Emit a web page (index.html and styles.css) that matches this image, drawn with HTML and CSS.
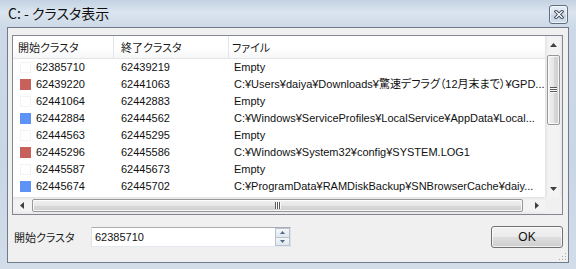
FILE: index.html
```html
<!DOCTYPE html>
<html lang="ja">
<head>
    <meta charset="UTF-8">
    <meta name="viewport" content="width=device-width, initial-scale=1.0">
    <title>C: - クラスタ表示</title>
    <link rel="stylesheet" href="styles.css">
</head>
<body>
    <div class="window">
        <div class="titlebar">
            <span class="title">C: - クラスタ表示</span>
            <button class="close" aria-label="閉じる">
                <svg width="10" height="9" viewBox="0 0 10 9">
                    <path d="M2 1.5 L8 7.5 M8 1.5 L2 7.5" stroke="#3d4a5a" stroke-width="3.2" stroke-linecap="square"/>
                    <path d="M2 1.5 L8 7.5 M8 1.5 L2 7.5" stroke="#fff" stroke-width="1.3" stroke-linecap="square"/>
                </svg>
            </button>
        </div>
        <div class="client">
            <div class="listview">
                <div class="lv-main">
                    <div class="lv-head">
                        <div class="c1">開始クラスタ</div>
                        <div class="c2">終了クラスタ</div>
                        <div class="c3">ファイル</div>
                    </div>
                    <div class="lv-body">
                        <div class="lv-row"><div class="c1"><span class="swatch"></span>62385710</div><div class="c2">62439219</div><div class="c3">Empty</div></div>
                        <div class="lv-row"><div class="c1"><span class="swatch red"></span>62439220</div><div class="c2">62441063</div><div class="c3">C:¥Users¥daiya¥Downloads¥驚速デフラグ（12月末まで）¥GPD...</div></div>
                        <div class="lv-row"><div class="c1"><span class="swatch"></span>62441064</div><div class="c2">62442883</div><div class="c3">Empty</div></div>
                        <div class="lv-row"><div class="c1"><span class="swatch blue"></span>62442884</div><div class="c2">62444562</div><div class="c3">C:¥Windows¥ServiceProfiles¥LocalService¥AppData¥Local...</div></div>
                        <div class="lv-row"><div class="c1"><span class="swatch"></span>62444563</div><div class="c2">62445295</div><div class="c3">Empty</div></div>
                        <div class="lv-row"><div class="c1"><span class="swatch red"></span>62445296</div><div class="c2">62445586</div><div class="c3">C:¥Windows¥System32¥config¥SYSTEM.LOG1</div></div>
                        <div class="lv-row"><div class="c1"><span class="swatch"></span>62445587</div><div class="c2">62445673</div><div class="c3">Empty</div></div>
                        <div class="lv-row"><div class="c1"><span class="swatch blue"></span>62445674</div><div class="c2">62445702</div><div class="c3">C:¥ProgramData¥RAMDiskBackup¥SNBrowserCache¥daiy...</div></div>
                    </div>
                </div>
                <div class="vscroll">
                    <div class="sb-btn">
                        <svg width="7" height="4" viewBox="0 0 7 4"><path d="M0 4 L3.5 0 L7 4 Z" fill="#404040"/></svg>
                    </div>
                    <div class="sb-track">
                        <div class="thumb thumb-v">
                            <svg width="7" height="6" viewBox="0 0 7 6">
                                <path d="M0 0.5 H7 M0 2.5 H7 M0 4.5 H7" stroke="#5a5a5a" stroke-width="1"/>
                                <path d="M0 1.5 H7 M0 3.5 H7 M0 5.5 H7" stroke="#fafafa" stroke-width="1"/>
                            </svg>
                        </div>
                    </div>
                    <div class="sb-btn">
                        <svg width="7" height="4" viewBox="0 0 7 4"><path d="M0 0 L3.5 4 L7 0 Z" fill="#404040"/></svg>
                    </div>
                </div>
                <div class="hscroll">
                    <div class="sb-btn">
                        <svg width="4" height="7" viewBox="0 0 4 7"><path d="M4 0 L0 3.5 L4 7 Z" fill="#404040"/></svg>
                    </div>
                    <div class="sb-track">
                        <div class="thumb thumb-h">
                            <svg width="6" height="7" viewBox="0 0 6 7">
                                <path d="M0.5 0 V7 M2.5 0 V7 M4.5 0 V7" stroke="#5a5a5a" stroke-width="1"/>
                                <path d="M1.5 0 V7 M3.5 0 V7 M5.5 0 V7" stroke="#fafafa" stroke-width="1"/>
                            </svg>
                        </div>
                    </div>
                    <div class="sb-btn">
                        <svg width="4" height="7" viewBox="0 0 4 7"><path d="M0 0 L4 3.5 L0 7 Z" fill="#404040"/></svg>
                    </div>
                </div>
                <div class="corner"></div>
            </div>
            <div class="footer">
                <label class="field-label" for="start">開始クラスタ</label>
                <div class="spinbox">
                    <input type="text" id="start" value="62385710">
                    <div class="spin">
                        <div class="spin-half"><svg width="5" height="3" viewBox="0 0 5 3"><path d="M0 3 L2.5 0 L5 3 Z" fill="#4f6a8a"/></svg></div>
                        <div class="spin-half"><svg width="5" height="3" viewBox="0 0 5 3"><path d="M0 0 L2.5 3 L5 0 Z" fill="#4f6a8a"/></svg></div>
                    </div>
                </div>
                <div class="spacer"></div>
                <button class="ok">OK</button>
            </div>
            <svg class="grip" width="8" height="8" viewBox="0 0 8 8">
                <rect x="6" y="0" width="1" height="1" fill="#a8a8a8"/>
                <rect x="3" y="3" width="1" height="1" fill="#a8a8a8"/>
                <rect x="6" y="3" width="1" height="1" fill="#a8a8a8"/>
                <rect x="0" y="6" width="1" height="1" fill="#a8a8a8"/>
                <rect x="3" y="6" width="1" height="1" fill="#a8a8a8"/>
                <rect x="6" y="6" width="1" height="1" fill="#a8a8a8"/>
            </svg>
        </div>
    </div>
</body>
</html>
```

FILE: styles.css
```css
* {
    box-sizing: border-box;
}
body {
    margin: 0;
    width: 576px;
    height: 269px;
    overflow: hidden;
    font-family: "Liberation Sans", "Noto Sans CJK JP", sans-serif;
    font-feature-settings: "palt";
    color: #000;
}
.window {
    width: 576px;
    height: 269px;
    display: flex;
    flex-direction: column;
    padding: 0 7px 6px 7px;
    background: linear-gradient(to bottom, #c3d1e1 0, #dbe5f0 12px, #cdd9e7 27px, #c9d6e5 60%, #d3dde9 100%);
}
.titlebar {
    height: 27px;
    display: flex;
    align-items: flex-start;
    justify-content: space-between;
    padding: 0 1px;
}
.title {
    margin-top: 4px;
    font-family: "Noto Sans CJK JP", sans-serif;
    font-size: 14px;
    line-height: 18px;
    color: #111;
}
.close {
    margin-top: 5px;
    width: 19px;
    height: 19px;
    padding: 0;
    display: flex;
    align-items: center;
    justify-content: center;
    border: 1px solid #5f6e80;
    border-radius: 3px;
    background: linear-gradient(to bottom, #e9eff6 0, #d6e0ec 50%, #c5d2e2 51%, #d3dfec 100%);
    box-shadow: inset 0 0 0 1px rgba(255, 255, 255, 0.6);
}
.client {
    position: relative;
    flex: 1;
    border: 1px solid #6f7c8c;
    background-color: #f0f0f0;
    padding: 7px 5px 0 4px;
}
.listview {
    width: 551px;
    height: 180px;
    border: 1px solid #828790;
    background-color: #fff;
    display: grid;
    grid-template-columns: 1fr 17px;
    grid-template-rows: 1fr 17px;
}
.lv-main {
    overflow: hidden;
}
.lv-head {
    height: 23px;
    display: flex;
    border-bottom: 1px solid #e5e5e5;
    background: linear-gradient(to bottom, #fff 0, #fff 55%, #f5f6f7 100%);
    font-family: "Noto Sans CJK JP", sans-serif;
    font-size: 11px;
    color: #1a1a1a;
}
.lv-head > div {
    display: flex;
    align-items: center;
}
.lv-head .c1,
.lv-head .c2 {
    border-right: 1px solid #e3e5e8;
}
.c1 {
    width: 101px;
    padding-left: 5px;
    flex-shrink: 0;
}
.c2 {
    width: 115px;
    padding-left: 7px;
    flex-shrink: 0;
}
.c3 {
    flex: 1;
    padding-left: 3px;
    white-space: nowrap;
    overflow: hidden;
}
.lv-row {
    height: 17px;
    display: flex;
    align-items: center;
    font-size: 11px;
    line-height: 17px;
    color: #111;
}
.lv-row .c1 {
    display: flex;
    align-items: center;
    gap: 5px;
    padding-left: 7px;
}
.lv-row .c3 {
    padding-left: 5px;
}
.swatch {
    width: 11px;
    height: 11px;
    background-color: #fff;
    border: 1px solid #f3f3f3;
}
.swatch.red {
    background-color: #c8605b;
    border-color: #c8605b;
}
.swatch.blue {
    background-color: #5e93f6;
    border-color: #5e93f6;
}
.vscroll {
    grid-row: 1;
    grid-column: 2;
    display: flex;
    flex-direction: column;
    background: linear-gradient(to right, #e3e3e3 0, #f3f3f3 20%, #f3f3f3 80%, #e8e8e8 100%);
}
.hscroll {
    grid-row: 2;
    grid-column: 1;
    display: flex;
    background: linear-gradient(to bottom, #e3e3e3 0, #f3f3f3 20%, #f3f3f3 80%, #e8e8e8 100%);
}
.corner {
    grid-row: 2;
    grid-column: 2;
    background-color: #f0f0f0;
}
.sb-btn {
    width: 17px;
    height: 17px;
    flex-shrink: 0;
    display: flex;
    align-items: center;
    justify-content: center;
}
.sb-track {
    flex: 1;
    display: flex;
}
.vscroll .sb-track {
    flex-direction: column;
    padding: 2px 2px 0 2px;
}
.hscroll .sb-track {
    padding: 2px 5px 2px 2px;
}
.thumb {
    border: 1px solid #979797;
    border-radius: 2px;
    display: flex;
    align-items: center;
    justify-content: center;
    box-shadow: inset 0 0 0 1px rgba(255, 255, 255, 0.8);
}
.thumb-v {
    height: 70px;
    background: linear-gradient(to right, #f1f1f1 0, #e6e6e6 50%, #d8d8d8 51%, #cfcfcf 100%);
}
.thumb-h {
    flex: 1;
    background: linear-gradient(to bottom, #f1f1f1 0, #e6e6e6 50%, #d8d8d8 51%, #cfcfcf 100%);
}
.footer {
    display: flex;
    align-items: center;
    height: 22px;
    margin-top: 11px;
}
.field-label {
    width: 79px;
    padding-left: 2px;
    font-family: "Noto Sans CJK JP", sans-serif;
    font-size: 11px;
    color: #1a1a1a;
}
.spinbox {
    width: 200px;
    height: 20px;
    display: flex;
    border: 1px solid #abadb3;
    border-color: #abadb3 #dbdfe6 #e3e9ef #e2e3ea;
    background-color: #fff;
}
.spinbox input {
    flex: 1;
    min-width: 0;
    border: none;
    outline: none;
    padding: 0 0 0 3px;
    font-family: "Liberation Sans", sans-serif;
    font-size: 11px;
    line-height: 18px;
    height: 18px;
    color: #111;
}
.spin {
    width: 15px;
    display: flex;
    flex-direction: column;
    border: 1px solid #b9c4d2;
}
.spin-half {
    flex: 1;
    display: flex;
    align-items: center;
    justify-content: center;
    background: linear-gradient(to bottom, #f4f6f9, #e1e6ee);
}
.spin-half + .spin-half {
    border-top: 1px solid #b9c4d2;
}
.spacer {
    flex: 1;
}
.ok {
    width: 72px;
    height: 22px;
    padding: 0;
    border: 1px solid #707070;
    border-radius: 3px;
    background: linear-gradient(to bottom, #f2f2f2 0, #ebebeb 50%, #dddddd 51%, #cfcfcf 100%);
    box-shadow: inset 0 0 0 1px rgba(255, 255, 255, 0.7);
    font-family: "Liberation Sans", sans-serif;
    font-size: 12px;
    color: #111;
}
.grip {
    position: absolute;
    right: 1px;
    bottom: 1px;
}
```
